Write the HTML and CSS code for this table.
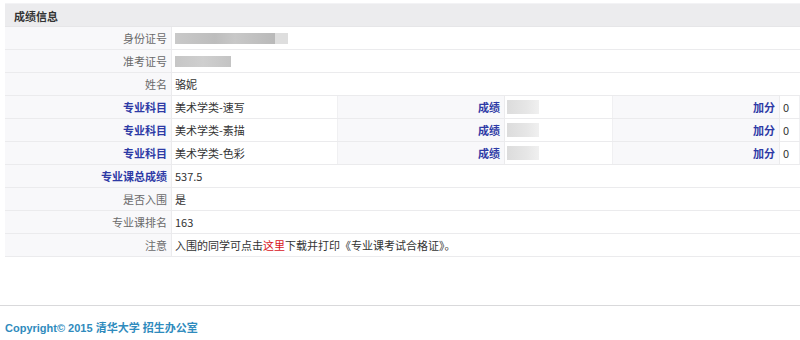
FILE: index.html
```html
<!DOCTYPE html>
<html lang="zh-CN">
<head>
<meta charset="utf-8">
<title>成绩信息</title>
<link rel="stylesheet" href="styles.css">
</head>
<body>
<main class="page">
  <section class="panel">
    <div class="panel-head">成绩信息</div>
    <div class="row">
      <div class="lbl">身份证号</div>
      <div class="val"><span class="blur blur-id"><span class="blur-tail"></span></span></div>
    </div>
    <div class="row">
      <div class="lbl">准考证号</div>
      <div class="val"><span class="blur blur-no"></span></div>
    </div>
    <div class="row">
      <div class="lbl">姓名</div>
      <div class="val">骆妮</div>
    </div>
    <div class="row row-6">
      <div class="lbl key">专业科目</div>
      <div class="val">美术学类-速写</div>
      <div class="lbl key">成绩</div>
      <div class="val"><span class="blur blur-score"></span></div>
      <div class="lbl key">加分</div>
      <div class="val">0</div>
    </div>
    <div class="row row-6">
      <div class="lbl key">专业科目</div>
      <div class="val">美术学类-素描</div>
      <div class="lbl key">成绩</div>
      <div class="val"><span class="blur blur-score"></span></div>
      <div class="lbl key">加分</div>
      <div class="val">0</div>
    </div>
    <div class="row row-6">
      <div class="lbl key">专业科目</div>
      <div class="val">美术学类-色彩</div>
      <div class="lbl key">成绩</div>
      <div class="val"><span class="blur blur-score"></span></div>
      <div class="lbl key">加分</div>
      <div class="val">0</div>
    </div>
    <div class="row">
      <div class="lbl key">专业课总成绩</div>
      <div class="val">537.5</div>
    </div>
    <div class="row">
      <div class="lbl">是否入围</div>
      <div class="val">是</div>
    </div>
    <div class="row">
      <div class="lbl">专业课排名</div>
      <div class="val">163</div>
    </div>
    <div class="row">
      <div class="lbl">注意</div>
      <div class="val">入围的同学可点击<a class="here" href="#">这里</a>下载并打印《专业课考试合格证》。</div>
    </div>
  </section>
  <footer class="footer">Copyright© 2015 清华大学 招生办公室</footer>
</main>
</body>
</html>
```
FILE: styles.css
```css
html, body {
  margin: 0;
  padding: 0;
  background: #ffffff;
}

.page {
  width: 800px;
  height: 340px;
  overflow: hidden;
  font-family: "Noto Sans CJK SC", "Liberation Sans", sans-serif;
  font-size: 11px;
  color: #333333;
}

.panel {
  margin: 3px 0 0 5px;
}

.panel-head {
  height: 24px;
  line-height: 24px;
  padding-left: 9px;
  background: #ececee;
  border-top: 1px solid #f3f3f5;
  border-bottom: 1px solid #e6e6e8;
  box-sizing: border-box;
  font-weight: bold;
  color: #333333;
}

.row {
  display: grid;
  grid-template-columns: 167px 1fr;
  height: 23px;
  border-bottom: 1px solid #ebebed;
  box-sizing: border-box;
}

.row-6 {
  grid-template-columns: 167px 166px 167px 108px 167px 1fr;
}

.lbl {
  background: #f8f8fa;
  color: #6a6a6a;
  text-align: right;
  padding-right: 4px;
  line-height: 22px;
  border-right: 1px solid #ebebed;
}

.lbl.key {
  color: #2e3aa6;
  font-weight: bold;
}

.val {
  background: #ffffff;
  padding-left: 3px;
  line-height: 22px;
  white-space: nowrap;
  display: flex;
  align-items: center;
}

.row-6 .val {
  border-right: 1px solid #f0f0f2;
}

.blur {
  display: inline-block;
  background: #c4c4c4;
}

.blur-id {
  width: 100px;
  height: 11px;
  position: relative;
  background: linear-gradient(90deg, #c9c9c9 0%, #bdbdbd 40%, #c8c8c8 60%, #b9b9b9 100%);
}

.blur-tail {
  position: absolute;
  left: 100px;
  top: 0;
  width: 13px;
  height: 11px;
  background: #dedede;
}

.blur-no {
  width: 56px;
  height: 11px;
  background: linear-gradient(90deg, #c6c6c6 0%, #cfcfcf 50%, #c4c4c4 100%);
}

.blur-score {
  width: 32px;
  height: 14px;
  margin-left: -1px;
  background: linear-gradient(90deg, #dcdcdc 0%, #e6e6e6 60%, #f0f0f0 100%);
}

.here {
  color: #d8141c;
  text-decoration: none;
}

.footer {
  margin-top: 48px;
  border-top: 1px solid #d9d9db;
  padding: 13px 0 0 5px;
  font-family: "Liberation Sans", "Noto Sans CJK SC", sans-serif;
  font-weight: bold;
  font-size: 11px;
  color: #2f8bbd;
}
```
